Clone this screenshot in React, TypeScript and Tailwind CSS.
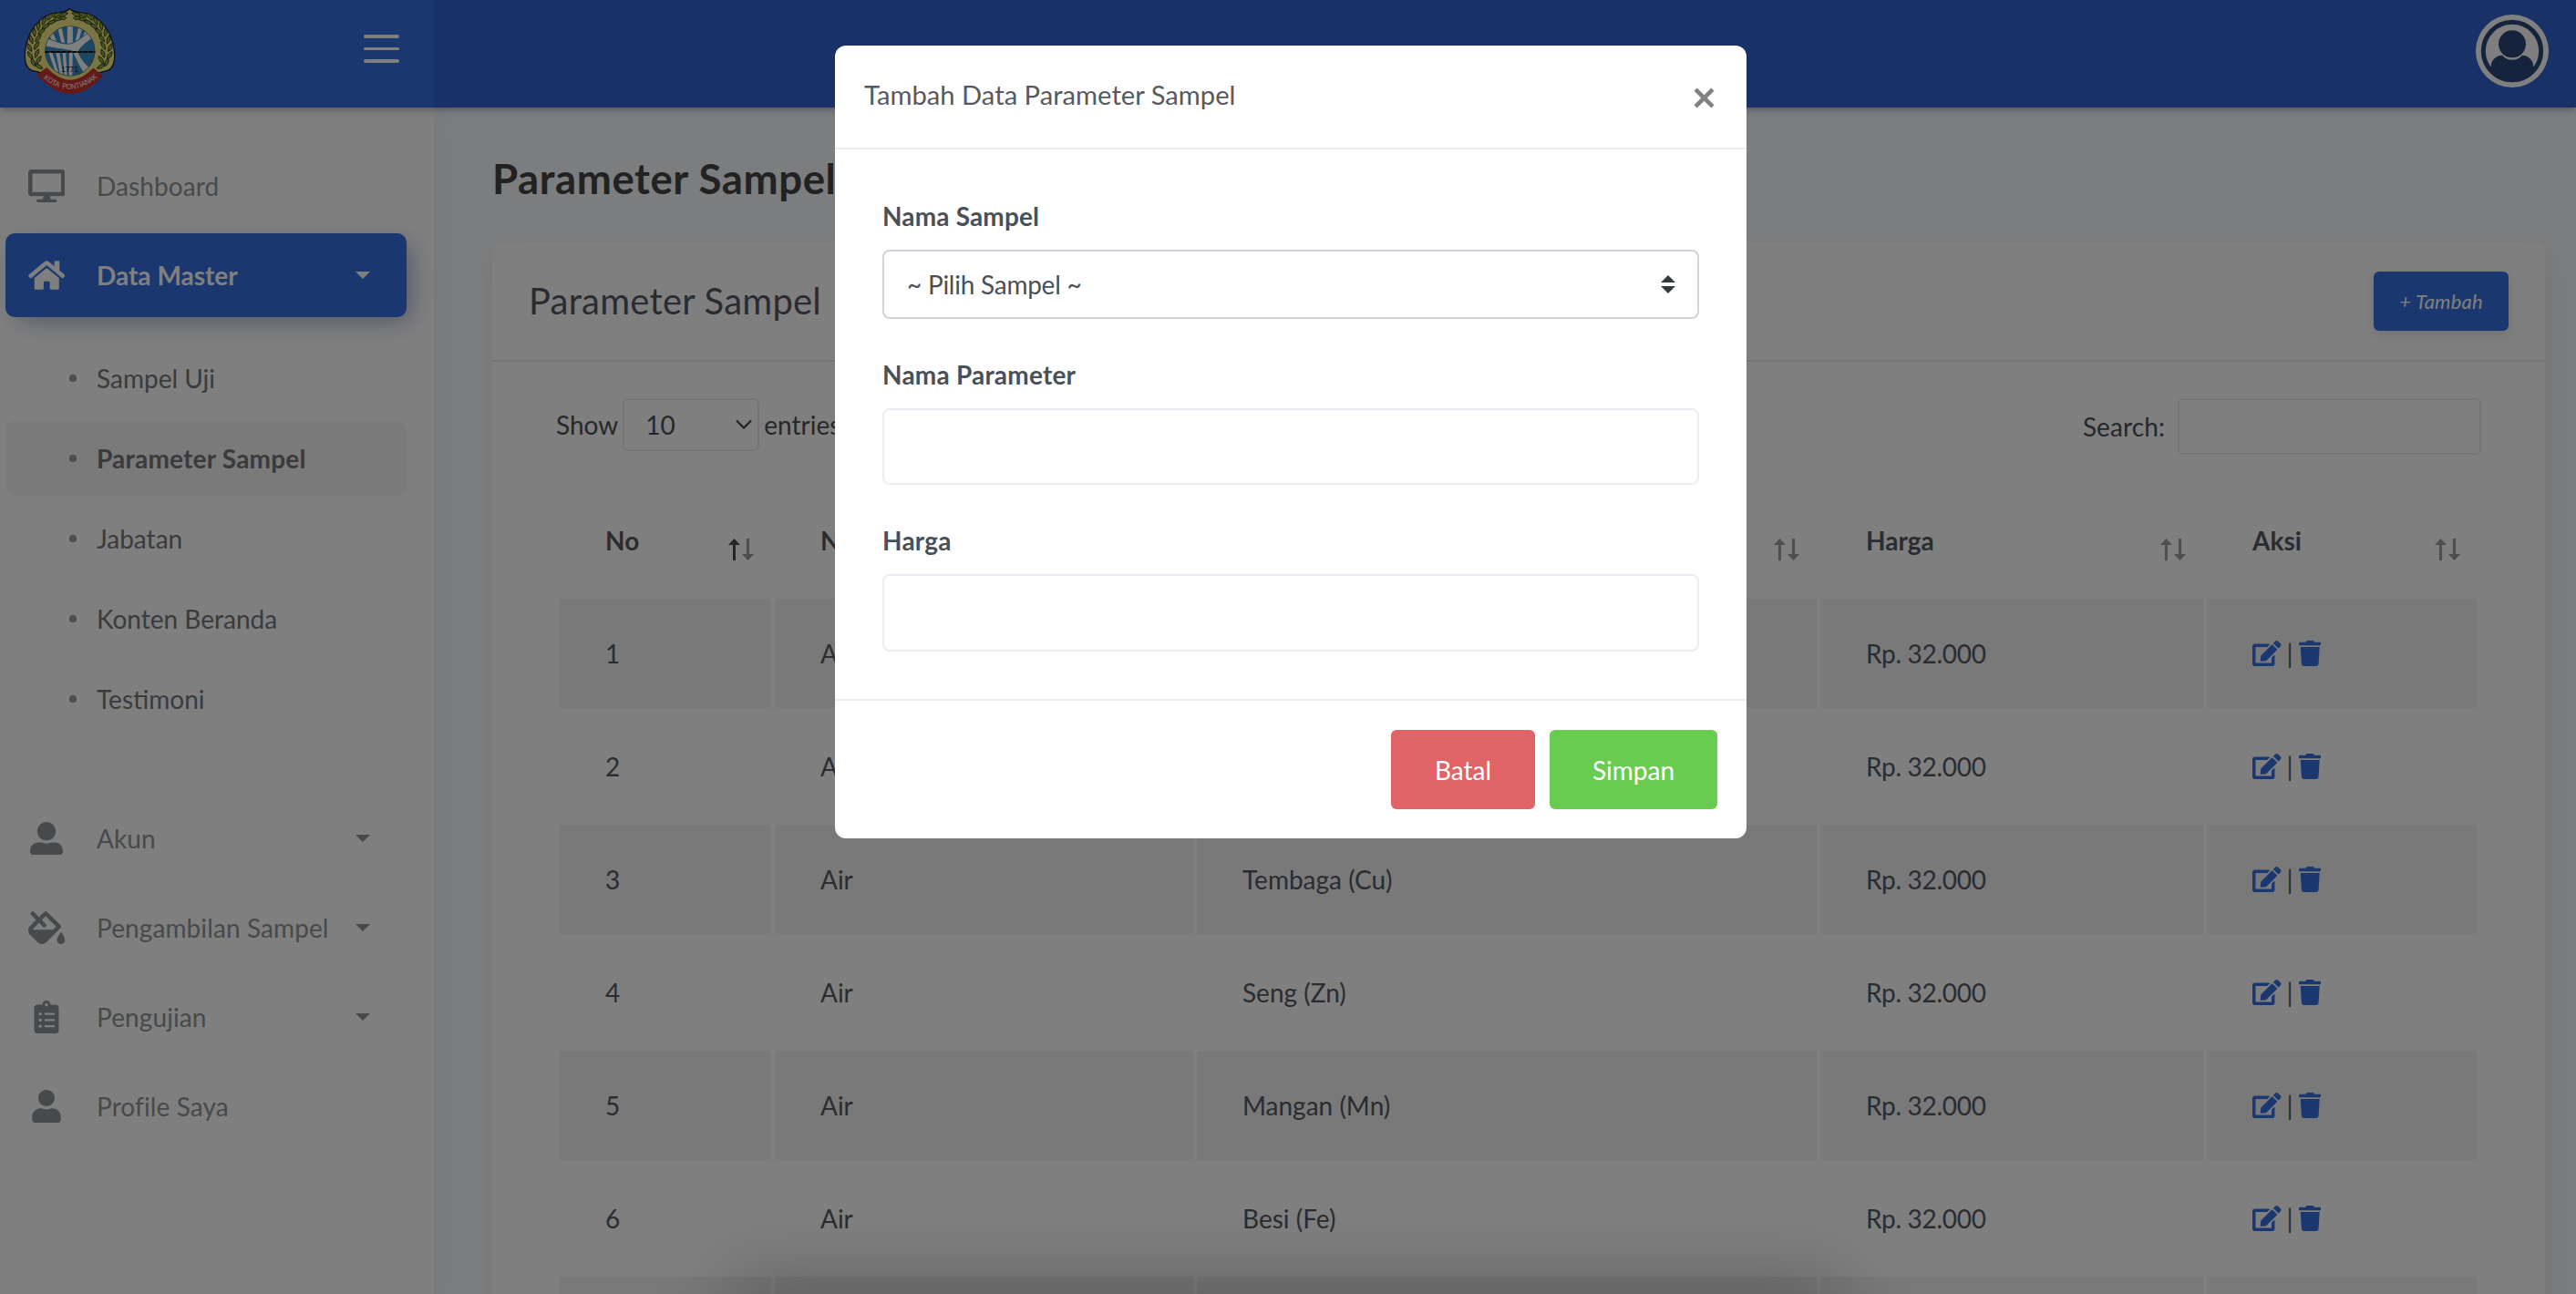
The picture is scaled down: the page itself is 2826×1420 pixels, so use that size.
import React from "react";
import {
  FaClipboardList,
  FaDesktop,
  FaEdit,
  FaFillDrip,
  FaHome,
  FaTrash,
  FaUser,
  FaUserAlt,
} from "react-icons/fa";

function Leaf({ x, y, angle }: { x: number; y: number; angle: number }) {
  return (
    <path
      d="M-15 0Q0 -13 15 0Q0 9 -15 0Z"
      transform={`translate(${x} ${y}) rotate(${angle})`}
      fill="#8fae3c"
      stroke="#2a2a10"
      strokeWidth="2.4"
    />
  );
}

const leftLeaves = [
  [108, 205, -115], [126, 198, -60], [98, 182, -125], [120, 176, -70], [96, 156, -115],
  [119, 150, -60], [102, 130, -105], [124, 126, -50], [112, 106, -95], [135, 104, -40],
  [126, 86, -80], [149, 87, -30], [144, 69, -65], [168, 74, -15], [164, 55, -50],
  [187, 64, -5], [186, 49, -30], [206, 60, 10], [208, 48, -20], [126, 218, -150],
];

function Emblem() {
  return (
    <svg viewBox="76 24 304 288" className="h-[96px] w-[101px]">
      <defs>
        <clipPath id="disc">
          <circle cx="229" cy="168" r="81" />
        </clipPath>
        <path id="ribbon" d="M139 258Q229 330 319 256" />
      </defs>
      <path
        d="M228 28C238 40 262 42 286 44C316 50 350 86 362 118C376 148 380 190 372 212C364 230 350 236 338 236L229 272L120 236C106 236 92 230 84 212C76 190 80 148 94 118C106 86 140 50 170 44C194 42 218 40 228 28Z"
        fill="#f4ea88"
        stroke="#222"
        strokeWidth="4"
      />
      {leftLeaves.map(([x, y, a], i) => (
        <g key={i}>
          <Leaf x={x} y={y} angle={a} />
          <g transform="translate(457 0) scale(-1 1)">
            <Leaf x={x} y={y} angle={a} />
          </g>
        </g>
      ))}
      <path d="M228 38L236 58L258 74L229 92L200 74L220 58Z" fill="#f4ea88" />
      <circle cx="229" cy="169" r="92" fill="#f4ea88" />
      <circle cx="229" cy="168" r="82" fill="#3a8fc4" stroke="#555" strokeWidth="2" />
      <g clipPath="url(#disc)" fill="#fff">
        <path d="M220 84H238V150H220ZM186 84H200L212 140H200ZM258 84H272L256 140H246ZM154 104L168 96L186 140H172ZM284 92L298 100L276 130H266Z" />
        <path d="M158 172H170L194 250L184 246ZM182 172H194L208 256H198ZM204 172H215L220 260H211ZM226 172H238L236 260H226Z" />
        <path
          d="M146 124L160 128C190 140 212 146 228 144C254 138 276 116 292 106L304 126C284 138 260 156 256 172C264 190 280 214 296 224L280 250C262 224 248 196 236 168C204 160 174 160 146 152Z"
          stroke="#3a8fc4"
          strokeWidth="3"
        />
      </g>
      <path d="M146 171H312" stroke="#111" strokeWidth="6" strokeDasharray="16 2" />
      <text x="228" y="236" textAnchor="middle" fontFamily="Liberation Sans" fontSize="26" fill="#222">1771</text>
      <path d="M119 246L152 222Q229 304 306 224L338 250Q229 370 119 246Z" fill="#cc342e" />
      <text fontFamily="Liberation Sans" fontSize="25" fill="#fff" xmlSpace="preserve">
        <textPath href="#ribbon" startOffset="2" textLength="198" lengthAdjust="spacingAndGlyphs">KOTA  PONTIANAK</textPath>
      </text>
    </svg>
  );
}

function Avatar() {
  return (
    <svg viewBox="348 48 240 240" className="size-[80px]">
      <defs>
        <clipPath id="inner">
          <circle cx="468" cy="168" r="96" />
        </clipPath>
      </defs>
      <circle cx="468" cy="168" r="120" fill="#fff" />
      <circle cx="468" cy="168" r="95" fill="#fff" stroke="#2a4878" strokeWidth="15" />
      <g clipPath="url(#inner)">
        <path d="M398 222C398 196 416 182 436 182C450 202 486 202 500 182C520 182 538 196 538 222L550 290H386Z" fill="#2a4878" />
      </g>
      <circle cx="468" cy="145" r="45" fill="#2a4878" />
    </svg>
  );
}

function Caret() {
  return <span className="mr-10 h-0 w-0 border-x-[8px] border-t-[8px] border-x-transparent border-t-current" />;
}

function NavItem({
  icon,
  label,
  caret,
  active,
}: {
  icon: React.ReactNode;
  label: string;
  caret?: boolean;
  active?: boolean;
}) {
  return (
    <div
      className={
        active
          ? "flex h-[92px] items-center rounded-[10px] bg-[#366edf] font-bold text-white shadow-[8px_8px_20px_rgba(0,0,0,0.1),8px_8px_30px_-10px_rgba(21,70,232,0.4)]"
          : "flex h-[92px] items-center tracking-[0.1px] text-[#8d9498]"
      }
    >
      <span className="flex w-[90px] justify-center text-[36px]">{icon}</span>
      <span className="ml-[10px] flex-1">{label}</span>
      {caret && <Caret />}
    </div>
  );
}

function SubItem({ label, active }: { label: string; active?: boolean }) {
  return (
    <div
      className={
        active
          ? "flex h-[82px] items-center rounded-[10px] bg-[#f4f4f4] pl-[70px] font-bold tracking-[0.2px] text-[#74767c]"
          : "flex h-[82px] items-center pl-[70px] text-[#74767c]"
      }
    >
      <span className="size-2 rounded-full bg-[#9a9a9a]" />
      <span className="ml-[22px]">{label}</span>
    </div>
  );
}

function SortArrows({ asc }: { asc?: boolean }) {
  return (
    <svg viewBox="0 0 28 24" className="mt-[19px] h-6 w-7">
      <g fill={asc ? "#4c4c50" : "#9c9ca0"}>
        <path d="M6.5 0L13 7H8V24H5V7H0Z" />
      </g>
      <path d="M20 0H23V17H28L21.5 24L15 17H20Z" fill="#9c9ca0" />
    </svg>
  );
}

const columns = ["No", "Nama Sampel", "Nama Parameter", "Harga", "Aksi"];
const parameters = ["Timbal (Pb)", "Kadmium (Cd)", "Tembaga (Cu)", "Seng (Zn)", "Mangan (Mn)", "Besi (Fe)"];

function TableRow({ index, name }: { index: number; name: string }) {
  const cell = index % 2 === 1 ? "flex items-center bg-[#f2f2f2] pl-[50px]" : "flex items-center pl-[50px]";
  return (
    <div className="grid h-[120px] shrink-0 grid-cols-[232px_459px_680px_420px_297px] gap-x-1">
      <div className={cell}>{index}</div>
      <div className={cell}>Air</div>
      <div className={cell}>{name}</div>
      <div className={cell}>
        <span className="tracking-[-0.3px]">Rp. 32.000</span>
      </div>
      <div className={cell}>
        <FaEdit className="h-[28px] w-[31.5px] text-[#366edf]" />
        <span className="mx-[5px] w-[9px] text-center">|</span>
        <FaTrash className="h-[28px] w-[24.5px] text-[#366edf]" />
      </div>
    </div>
  );
}

function NextRowEdge() {
  return (
    <div className="grid h-[120px] shrink-0 grid-cols-[232px_459px_680px_420px_297px] gap-x-1">
      {columns.map((name) => (
        <div key={name} className="bg-[#f2f2f2]" />
      ))}
    </div>
  );
}

function Modal() {
  return (
    <div className="flex h-[870px] w-[1000px] flex-col rounded-[12px] bg-white text-[#495057]">
      <div className="flex h-[114px] justify-between border-b-2 border-[#ebecf1] pl-8 pr-[35px]">
        <span className="mt-[34px] text-[29.2px] leading-[40px] text-[#575962]">Tambah Data Parameter Sampel</span>
        <svg viewBox="0 0 22 22" className="mt-[46px] size-[23px]">
          <path d="M2 2L20 20M20 2L2 20" stroke="#808080" strokeWidth="4.4" />
        </svg>
      </div>
      <div className="flex flex-1 flex-col px-[52px]">
        <label className="mt-[53px] font-bold leading-[40px] tracking-[0.15px]">Nama Sampel</label>
        <div className="mt-[17px] flex h-[76px] items-center justify-between rounded-[8px] border-2 border-[#ced4da] pl-[25px] pr-6">
          <span className="tracking-[-0.25px]">~ Pilih Sampel ~</span>
          <svg viewBox="0 0 16 20" className="h-5 w-4">
            <path d="M8 0L16 8H0ZM0 12H16L8 20Z" fill="#343a40" />
          </svg>
        </div>
        <label className="mt-[41px] font-bold leading-[40px] tracking-[0.2px]">Nama Parameter</label>
        <div className="mt-[17px] h-[84px] rounded-[8px] border-2 border-[#ebedf2]" />
        <label className="mt-[41px] font-bold leading-[40px] tracking-[0.2px]">Harga</label>
        <div className="mt-[17px] h-[85px] rounded-[8px] border-2 border-[#ebedf2]" />
      </div>
      <div className="flex h-[153px] justify-end gap-4 border-t-2 border-[#ebecf1] pr-8 pt-8 text-white">
        <button className="h-[87px] w-[158px] rounded-[6px] bg-[#e06466]">Batal</button>
        <button className="h-[87px] w-[184px] rounded-[6px] bg-[#68cc50]">Simpan</button>
      </div>
    </div>
  );
}

export default function App() {
  return (
    <div className="relative flex h-[1420px] w-[2826px] flex-col overflow-hidden bg-[#f9fbfd] font-['Lato',sans-serif] text-[28px] leading-[42px]">
      <header className="relative z-10 flex h-[118px] shrink-0 bg-[#3164d0] shadow-[0_0_10px_rgba(18,23,39,0.5)]">
        <div className="flex w-[476px] items-start justify-between bg-[#366edf] pl-[26px] pr-[38px] pt-2">
          <Emblem />
          <div className="mt-[30px] flex flex-col gap-[10px]">
            <span className="h-[3.5px] w-[39px] rounded-full bg-white" />
            <span className="h-[3.5px] w-[39px] rounded-full bg-white" />
            <span className="h-[3.5px] w-[39px] rounded-full bg-white" />
          </div>
        </div>
        <div className="flex flex-1 justify-end pr-[30px] pt-4">
          <Avatar />
        </div>
      </header>

      <div className="flex min-h-0 flex-1">
        <aside className="w-[476px] shrink-0 bg-white pl-[6px] pr-[30px] pt-10 shadow-[8px_8px_20px_rgba(69,65,78,0.06)]">
          <nav className="flex flex-col gap-[6px]">
            <NavItem icon={<FaDesktop className="h-9 w-[40.5px]" />} label="Dashboard" />
            <NavItem icon={<FaHome className="h-9 w-[40.5px]" />} label="Data Master" caret active />
            <div className="mb-[60px] mt-5 flex flex-col gap-[6px]">
              <SubItem label="Sampel Uji" />
              <SubItem label="Parameter Sampel" active />
              <SubItem label="Jabatan" />
              <SubItem label="Konten Beranda" />
              <SubItem label="Testimoni" />
            </div>
            <NavItem icon={<FaUserAlt />} label="Akun" caret />
            <NavItem icon={<FaFillDrip className="h-9 w-[40.5px]" />} label="Pengambilan Sampel" caret />
            <NavItem icon={<FaClipboardList />} label="Pengujian" caret />
            <NavItem icon={<FaUser />} label="Profile Saya" />
          </nav>
        </aside>

        <main className="flex flex-1 flex-col pl-16 pr-[34px]">
          <h1 className="mt-[48px] text-[45.6px] font-bold leading-[60px] tracking-[0.55px] text-[#444]">Parameter Sampel</h1>
          <section className="mt-10 flex h-[1300px] flex-col rounded-[10px] bg-white text-[#575962] shadow-[4px_12px_30px_rgba(69,65,98,0.1)]">
            <div className="flex h-[131px] shrink-0 items-start justify-between border-b-2 border-[#ebebeb] px-10 pt-8">
              <h2 className="text-[40px] leading-[64px] tracking-[0.2px]">Parameter Sampel</h2>
              <button className="h-[65px] w-[148px] rounded-[6px] bg-[#366edf] text-[22px] italic tracking-[0.2px] text-white shadow-[0_4px_12px_rgba(0,0,0,0.12)]">
                + Tambah
              </button>
            </div>
            <div className="flex h-[102px] shrink-0 items-start justify-between pl-[70px] pr-[70px] pt-10 text-[#4c5056]">
              <div className="flex items-center">
                <span>Show</span>
                <div className="ml-[5px] flex h-[58px] w-[150px] items-center justify-between rounded-[6px] border-2 border-[#e9e9f2] pl-[23px] pr-[6px]">
                  <span>10</span>
                  <svg viewBox="0 0 18 12" className="h-3 w-[18px]">
                    <path d="M1 1.5L9 9.5L17 1.5" fill="none" stroke="#444" strokeWidth="2.2" />
                  </svg>
                </div>
                <span className="ml-[5px]">entries</span>
              </div>
              <div className="flex items-center">
                <span className="tracking-[0.1px]">Search:</span>
                <div className="ml-[14px] h-[62px] w-[333px] rounded-[6px] border-2 border-[#e9e9f2]" />
              </div>
            </div>
            <div className="flex flex-col gap-1 pl-[74px]">
              <div className="grid h-[154px] shrink-0 grid-cols-[232px_459px_680px_420px_297px] gap-x-1 font-bold">
                {columns.map((name, i) => (
                  <div key={name} className="flex items-start justify-between pl-[50px] pr-[19px] pt-[73px]">
                    <span>{name}</span>
                    <SortArrows asc={i === 0} />
                  </div>
                ))}
              </div>
              {parameters.map((name, i) => (
                <TableRow key={name} index={i + 1} name={name} />
              ))}
              <NextRowEdge />
            </div>
          </section>
        </main>
      </div>

      <div className="absolute left-[830px] top-[1430px] z-10 h-10 w-[1160px] shadow-[0_0_80px_30px_rgba(0,0,0,0.22)]" />

      <div className="absolute inset-0 z-20 flex items-start justify-center bg-black/50 pl-[6px] pt-[50px]">
        <Modal />
      </div>
    </div>
  );
}
